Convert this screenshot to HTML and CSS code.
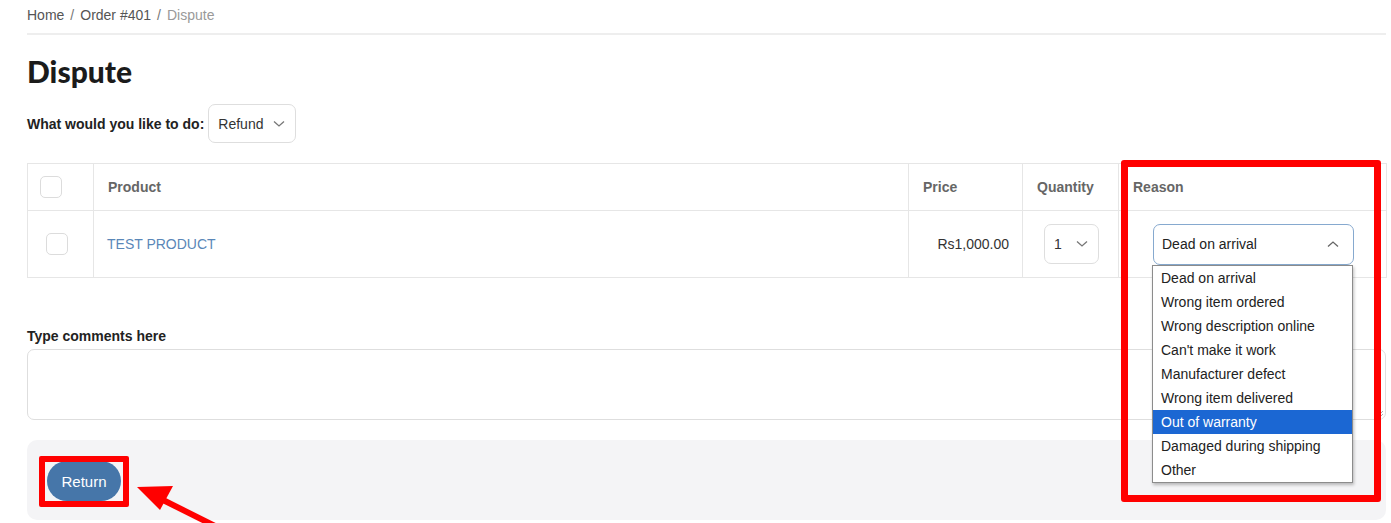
FILE: index.html
```html
<!DOCTYPE html>
<html>
<head>
<meta charset="utf-8">
<link rel="stylesheet" href="styles.css">
</head>
<body>
<div class="page">
  <nav class="crumbs"><span>Home</span><span class="sep">/</span><span>Order #401</span><span class="sep">/</span><span class="current">Dispute</span></nav>
  <h1 class="title">Dispute</h1>
  <div class="action-row">
    <span class="action-label">What would you like to do:</span>
    <div class="select select-action">Refund
      <svg class="chev" width="12" height="8" viewBox="0 0 12 8"><path d="M1 1.5 L6 6 L11 1.5" fill="none" stroke="#777" stroke-width="1.3"/></svg>
    </div>
  </div>
  <table class="grid">
    <colgroup><col class="c-check"><col class="c-prod"><col class="c-price"><col class="c-qty"><col class="c-reason"></colgroup>
    <thead>
      <tr>
        <th class="check-head"><span class="box"></span></th>
        <th>Product</th>
        <th>Price</th>
        <th>Quantity</th>
        <th>Reason</th>
      </tr>
    </thead>
    <tbody>
      <tr>
        <td class="check-body"><span class="box"></span></td>
        <td class="prod"><a>TEST PRODUCT</a></td>
        <td class="price">Rs1,000.00</td>
        <td class="qty"><div class="select select-qty">1
          <svg class="chev" width="12" height="8" viewBox="0 0 12 8"><path d="M1 1.5 L6 6 L11 1.5" fill="none" stroke="#777" stroke-width="1.3"/></svg></div></td>
        <td class="reason">
          <div class="reason-wrap">
            <div class="select select-reason">Dead on arrival
              <svg class="chev" width="12" height="8" viewBox="0 0 12 8"><path d="M1 6.5 L6 2 L11 6.5" fill="none" stroke="#666" stroke-width="1.3"/></svg>
            </div>
            <ul class="dropdown">
              <li>Dead on arrival</li>
              <li>Wrong item ordered</li>
              <li>Wrong description online</li>
              <li>Can't make it work</li>
              <li>Manufacturer defect</li>
              <li>Wrong item delivered</li>
              <li class="hl">Out of warranty</li>
              <li>Damaged during shipping</li>
              <li>Other</li>
            </ul>
          </div>
        </td>
      </tr>
    </tbody>
  </table>
  <div class="comments-label">Type comments here</div>
  <div class="textarea"><svg class="grip" width="8" height="8" viewBox="0 0 8 8"><path d="M7 1 L1 7 M7 4 L4 7" stroke="#aaa" stroke-width="1"/></svg></div>
  <div class="footer">
    <button class="btn-return">Return</button>
  </div>
  <div class="mark mark-reason"></div>
  <div class="mark mark-return"></div>
  <svg class="arrow" width="90" height="50" viewBox="0 0 90 50"><path d="M84 48 L22 17" stroke="#f00" stroke-width="6" fill="none"/><polygon points="2,7 38,6 25,30" fill="#f00"/></svg>
</div>
</body>
</html>
```
FILE: styles.css
```css
html, body { margin: 0; padding: 0; background: #fff; }
body { overflow: hidden; width: 1391px; height: 523px; font-family: "Liberation Sans", Arial, sans-serif; color: #222; }
.page { position: relative; margin-left: 27px; width: 1359px; }

.crumbs { font-size: 14px; line-height: 20px; color: #555; padding-top: 5px; padding-bottom: 8px; border-bottom: 2px solid #eeeeee; display: flex; gap: 6px; }
.crumbs .sep { color: #777; }
.crumbs .current { color: #999; }

.title { font-family: Lato, "Liberation Sans", sans-serif; font-weight: 900; font-size: 30px; line-height: 36px; margin: 18px 0 0 0; color: #1b1b1b; }

.action-row { display: flex; align-items: center; gap: 4px; margin-top: 15px; }
.action-label { font-weight: bold; font-size: 14px; color: #222; }
.select { box-sizing: border-box; display: flex; align-items: center; justify-content: space-between; border: 1px solid #dedede; border-radius: 7px; background: #fff; font-size: 14px; color: #333; }
.select-action { width: 88px; height: 39px; padding: 0 10px 0 9px; }

.grid { margin-top: 20px; width: 1359px; border-collapse: collapse; table-layout: fixed; font-size: 14px; }
.c-check { width: 66px; } .c-prod { width: 815px; } .c-price { width: 114px; } .c-qty { width: 96px; } .c-reason { width: 268px; }
.grid th, .grid td { border: 1px solid #e6e6e6; }
.grid th { height: 46px; text-align: left; font-weight: bold; color: #666; padding: 0 14px; vertical-align: middle; }
.grid td { height: 66px; padding: 0 13px; vertical-align: middle; }
.box { display: block; box-sizing: border-box; width: 22px; height: 22px; border: 1px solid #dcdcdc; border-radius: 5px; background: #fff; }
.grid th.check-head { padding-left: 12px; }
.grid td.check-body { padding-left: 18px; }
.prod a { color: #5a87b8; }
.price { text-align: right; color: #333; }
.grid td.qty { padding-left: 21px; }
.select-qty { width: 55px; height: 40px; padding: 0 10px 0 9px; }
.grid td.reason { padding-left: 34px; }
.reason-wrap { position: relative; }
.select-reason { width: 201px; height: 41px; padding: 0 14px 0 8px; border-color: #86a9cf; border-radius: 7px; color: #222; }
.dropdown { position: absolute; left: -1px; top: 41px; width: 201px; box-sizing: border-box; margin: 0; padding: 0; list-style: none; background: #fff; border: 1px solid #8c8c8c; box-shadow: 1px 2px 3px rgba(0,0,0,0.25); z-index: 5; }
.dropdown li { height: 24px; line-height: 24px; padding-left: 8px; font-size: 14px; color: #222; }
.dropdown li.hl { background: #1b67d3; color: #fff; }

.comments-label { margin-top: 48px; font-weight: bold; font-size: 14px; line-height: 20px; color: #222; }
.textarea { position: relative; margin-top: 3px; height: 71px; border: 1px solid #dedede; border-radius: 7px; box-sizing: border-box; }
.grip { position: absolute; right: 1px; bottom: 1px; }

.footer { margin-top: 20px; height: 80px; background: #f4f4f6; border-radius: 10px; padding: 21px 0 0 20px; box-sizing: border-box; }
.btn-return { height: 40px; width: 74px; border: none; border-radius: 20px; background: #4676a9; color: #fff; font-family: "Liberation Sans", Arial, sans-serif; font-size: 15px; padding: 0; }

.mark { position: absolute; border: 7px solid #ff0000; border-radius: 3px; box-sizing: border-box; pointer-events: none; z-index: 10; }
.mark-reason { left: 1094px; top: 160px; width: 260px; height: 342px; }
.mark-return { left: 12px; top: 456px; width: 90px; height: 51px; border-width: 6px; border-radius: 2px; }
.arrow { position: absolute; left: 108px; top: 480px; z-index: 10; }
```
